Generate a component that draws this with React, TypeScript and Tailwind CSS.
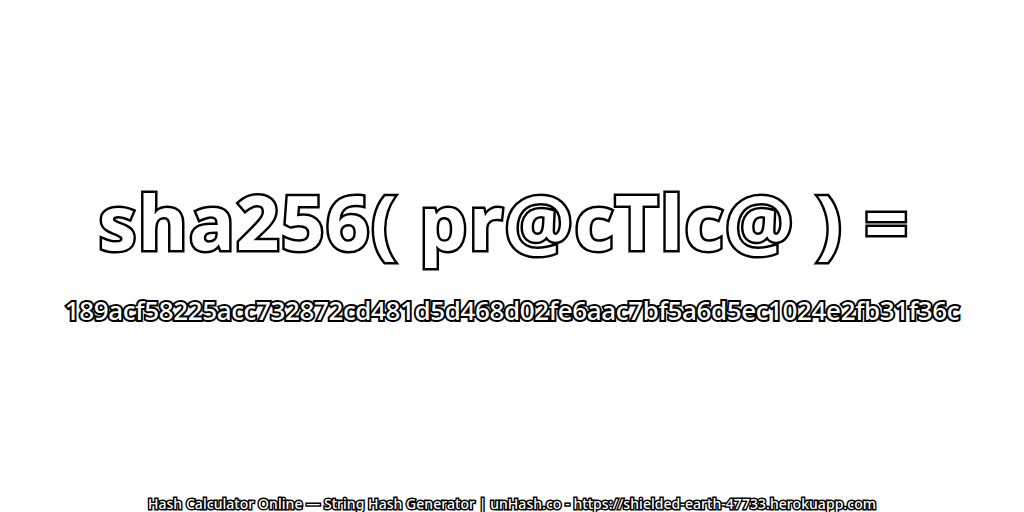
import React from 'react';

const outline = "text-white whitespace-nowrap font-['Noto_Sans',sans-serif] [paint-order:stroke_fill] text-center";

const App = () => {
  return (
    <div className="w-[1024px] h-[512px] bg-white overflow-hidden flex flex-col items-center">
      <div className={`${outline} font-bold mt-[172px] pr-[16px] text-[76px] leading-[98px] tracking-[1.5px] [-webkit-text-stroke:5px_#000]`}>
        sha256( pr@cTlc@ ) =
      </div>
      <div className={`${outline} font-medium mt-[23px] text-[26px] leading-[34px] tracking-[-0.37px] [-webkit-text-stroke:4px_#000]`}>
        189acf58225acc732872cd481d5d468d02fe6aac7bf5a6d5ec1024e2fb31f36c
      </div>
      <div className={`${outline} font-medium mt-[168px] text-[14px] leading-[17px] tracking-[0.05px] [-webkit-text-stroke:3px_#000]`}>
        Hash Calculator Online — String Hash Generator | unHash.co - https://shielded-earth-47733.herokuapp.com
      </div>
    </div>
  );
};

export default App;
